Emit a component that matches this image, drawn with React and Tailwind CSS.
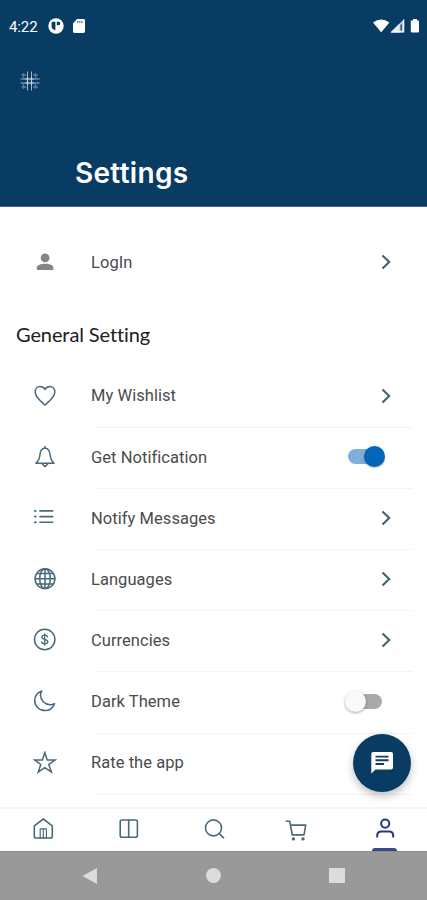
import React, { useState } from "react";

const Icon = ({ children, className = "w-6 h-6 text-[#4a6a7a]", width = 1.5 }) => (
  <svg
    viewBox="0 0 24 24"
    fill="none"
    stroke="currentColor"
    strokeWidth={width}
    strokeLinecap="round"
    strokeLinejoin="round"
    className={`shrink-0 ${className}`}
  >
    {children}
  </svg>
);

const HeartIcon = () => (
  <Icon>
    <path d="M12 21C8 17.6 2.2 13.4 2.2 8.1C2.2 4.8 4.4 2.5 7.1 2.5C9.2 2.5 11 3.6 12 5.4C13 3.6 14.8 2.5 16.9 2.5C19.6 2.5 21.8 4.8 21.8 8.1C21.8 13.4 16 17.6 12 21Z" />
  </Icon>
);

const BellIcon = () => (
  <Icon>
    <path d="M12 1.4V2.9M12 2.9C8.9 3.4 7.2 6.1 7 9.2C6.7 13.6 5.6 15.8 2.9 18.2H21.1C18.4 15.8 17.3 13.6 17 9.2C16.8 6.1 15.1 3.4 12 2.9Z" />
    <path d="M8.9 18.6L12 21.8L15.1 18.6" />
  </Icon>
);

const ListIcon = () => (
  <Icon width={1.6}>
    <path d="M6.9 4.9H19.7M6.9 10.6H19.7M6.9 16.3H19.7" />
    <path d="M2 4.9H2.6M2 10.6H2.6M2 16.3H2.6" strokeWidth="2" />
  </Icon>
);

const GlobeIcon = () => (
  <Icon>
    <circle cx="12" cy="11.7" r="9.9" />
    <ellipse cx="12" cy="11.7" rx="5.3" ry="9.9" />
    <path d="M12 1.8V21.6M2.1 11.7H21.9M4 6.5H20M4 16.9H20" />
  </Icon>
);

const DollarIcon = () => (
  <Icon>
    <circle cx="11.7" cy="11.5" r="10.2" />
    <path
      d="M14.6 8.9C14.3 7.7 13.2 7.2 11.7 7.2C10 7.2 8.9 8 8.9 9.3C8.9 12.2 14.8 10.7 14.8 13.7C14.8 15 13.5 15.8 11.8 15.8C10 15.8 8.9 15.1 8.6 13.8M11.7 5.9V17.1"
      strokeWidth="1.3"
    />
  </Icon>
);

const MoonIcon = () => (
  <Icon>
    <path d="M8.8 2C4.6 3.1 1.6 7 1.7 11.6C1.8 17.2 6.3 21.6 12 21.6C16.3 21.6 19.9 19 21.5 14.7C20 15.6 18.6 15.9 17.2 15.8C11.6 15.6 7.5 11.3 7.5 6C7.5 4.5 8 3.2 8.8 2Z" />
  </Icon>
);

const StarIcon = () => (
  <Icon>
    <path
      d="M11.8 1.6L14.2 8.9H22.2L15.8 13.5L18.4 21.2L11.8 16.6L5.2 21.2L7.8 13.5L1.4 8.9H9.4Z"
      strokeLinejoin="miter"
    />
  </Icon>
);

const Chevron = () => (
  <svg viewBox="0 0 10 16" fill="none" className="w-[10px] h-4 shrink-0 mr-[6px]">
    <path d="M1.5 1.5L8.2 8L1.5 14.5" stroke="#446170" strokeWidth="2.1" />
  </svg>
);

const Toggle = ({ on, onChange }) => (
  <button
    type="button"
    role="switch"
    aria-checked={on}
    onClick={onChange}
    className={`flex items-center h-[22px] shrink-0 ${on ? "mr-[12px]" : "mr-[15px]"}`}
  >
    {on ? (
      <>
        <span className="w-[30px] h-[15px] rounded-full bg-[#7eafdb]" />
        <span className="w-[21px] h-[21px] -ml-[14px] rounded-full bg-[#0566b8] shadow-[0_1px_2px_rgba(0,0,0,0.25)]" />
      </>
    ) : (
      <>
        <span className="w-[21px] h-[21px] z-10 rounded-full bg-[#fafafa] shadow-[0_1px_3px_rgba(0,0,0,0.35)]" />
        <span className="w-[30px] h-[15px] -ml-[14px] rounded-full bg-[#a9a9a9]" />
      </>
    )}
  </button>
);

const Row = ({ icon, label, children }) => (
  <div className="h-[61.15px] flex flex-col shrink-0">
    <div className="flex-1 flex items-center pl-[33px] pr-[30px] pb-[2px]">
      {icon}
      <span className="ml-[34px] flex-1 pt-[2px] text-[16.5px] tracking-[0.05px] text-[#4b4b4b]">
        {label}
      </span>
      {children}
    </div>
    <div className="h-px ml-[96px] mr-[15px] bg-[#f4f4f4]" />
  </div>
);

const StatusBar = () => (
  <div className="flex items-center h-[52px] pl-[9px] pr-[6px] text-white">
    <span className="text-[15px] leading-none tracking-[-0.1px] w-[39px] pt-[2px]">4:22</span>
    <svg viewBox="0 0 16 16" className="w-4 h-4">
      <circle cx="8" cy="8" r="7.7" fill="#fff" />
      <path d="M3.6 5Q3.6 3.8 4.8 3.8H7.4V12.2C5.4 12 3.7 10.6 3.6 8.6Z" fill="#083c63" />
      <path d="M8.8 3.8H10.8Q12.2 3.8 12.2 5.4Q12.2 7.2 10.6 7.2H8.8Z" fill="#083c63" />
    </svg>
    <svg viewBox="0 0 12 14" className="w-3 h-[14px] ml-[9px]">
      <path d="M4.2 0H10.6Q12 0 12 1.4V12.6Q12 14 10.6 14H1.4Q0 14 0 12.6V4.2Z" fill="#fff" />
      <path d="M4.8 2.1V3.8M6.9 2.1V3.8M9 2.1V3.8" stroke="#083c63" strokeWidth="1" />
    </svg>
    <span className="flex-1" />
    <svg viewBox="0 0 48 16" className="w-12 h-4">
      <path d="M0 4.4Q8.2 -1.5 16.4 4.4L8.2 14.3Z" fill="#fff" />
      <path d="M31.2 1V14.4H17.5Z" fill="#c2ced8" />
      <path d="M26.5 5.6V14.4H17.5Z" fill="#e4eaee" />
      <path d="M28.2 6.5V12.5" stroke="#335b7b" strokeWidth="1.6" />
      <path d="M30.7 1.5V13.9H18.5" stroke="#fff" strokeWidth="0.9" fill="none" />
      <path d="M40 1H44V2.4H46V13.2Q46 14.5 44.7 14.5H39.1Q37.8 14.5 37.8 13.2V2.4H40Z" fill="#fff" />
    </svg>
  </div>
);

const Header = () => (
  <header className="h-[207px] shrink-0 bg-[#083c63] border-b border-[#4c6488] flex flex-col">
    <StatusBar />
    <svg viewBox="0 0 20 20" className="w-5 h-5 ml-[20px] mt-[19px]" stroke="#d5e0ea">
      <path d="M7.5 0.5V19.5M11.5 0.5V19.5M0.5 8H19.5M0.5 12H19.5" strokeWidth="1" opacity="0.75" />
      <path d="M3.5 2V7M15.5 2V7M3.5 13V18M15.5 13V18M1.5 4H6M13 4H18M1.5 16H6M13 16H18" strokeWidth="1.4" opacity="0.4" />
      <path d="M7.5 6V14M11.5 6V14M5 8H14M5 12H14" strokeWidth="1.2" opacity="0.7" />
    </svg>
    <h1 className="mt-[63px] ml-[75px] font-['Inter'] text-[28px] leading-[38px] font-semibold tracking-[0.3px] text-white">
      Settings
    </h1>
  </header>
);

const BottomNav = () => (
  <nav className="h-[44px] shrink-0 flex border-t-2 border-[#f5f5f5] bg-white pl-[31px]">
    <div className="w-[86px] pt-[8px]">
      <Icon width={1.6}>
        <path d="M3.3 8.8L12.3 2L21.3 8.8V19.2Q21.3 21 19.5 21H5.1Q3.3 21 3.3 19.2Z" />
        <path d="M9.2 20.9V11.9H15.4V20.9M12.3 12.4V20.9" strokeWidth="1.2" />
      </Icon>
    </div>
    <div className="w-[86px] pt-[8px]">
      <Icon width={1.6}>
        <rect x="3.2" y="3" width="17.2" height="17.2" rx="1.8" />
        <path d="M11.7 3.2V20.2" />
      </Icon>
    </div>
    <div className="w-[82px] pt-[8px]">
      <Icon width={1.6}>
        <circle cx="10.5" cy="10.9" r="8" />
        <path d="M16.3 16.7L20.6 20.8" />
      </Icon>
    </div>
    <div className="w-[86px] pt-[8px]">
      <Icon width={1.6}>
        <path d="M1.2 4.3H4.7L7.3 17.9H19L20.7 8.1H5.5" />
        <circle cx="8.4" cy="21.9" r="0.9" fill="currentColor" />
        <circle cx="18" cy="21.9" r="0.9" fill="currentColor" />
      </Icon>
    </div>
    <div className="w-[27px] flex flex-col items-center justify-between pt-[8px]">
      <Icon className="w-6 h-6 text-[#263a79]" width={2}>
        <circle cx="12.2" cy="6.6" r="4.1" />
        <path d="M4.2 20.6V18.6C4.2 16 6 14.5 8.4 14.5H16C18.4 14.5 20.2 16 20.2 18.6V20.6" strokeLinecap="butt" />
      </Icon>
      <span className="w-[25px] h-[3px] rounded-t-sm bg-[#354b83]" />
    </div>
  </nav>
);

const SystemBar = () => (
  <div className="h-[49px] shrink-0 bg-[#999999] border-t border-[#8c8c8c] flex items-center justify-between pl-[82px] pr-[82px] pb-[1px]">
    <svg viewBox="0 0 16 18" className="w-4 h-[18px]">
      <path d="M15 1V17L0.5 9Z" fill="#dcdcdc" />
    </svg>
    <span className="w-[15px] h-[15px] rounded-full bg-[#dcdcdc]" />
    <span className="w-4 h-[15px] bg-[#dcdcdc]" />
  </div>
);

const App = () => {
  const [notify, setNotify] = useState(true);
  const [dark, setDark] = useState(false);

  return (
    <div className="relative w-[427px] h-[900px] overflow-hidden flex flex-col bg-white font-['Roboto',sans-serif]">
      <Header />

      <main className="flex-1 min-h-0 overflow-hidden flex flex-col">
        <div className="h-[110px] flex items-center pl-[33px] pr-[30px] shrink-0">
          <svg viewBox="0 0 24 24" className="w-6 h-6 shrink-0" fill="#858585">
            <circle cx="12.1" cy="7.8" r="4.4" />
            <path d="M3.8 20V17.6C3.8 14.9 8 13.7 12.1 13.7C16.2 13.7 20.4 14.9 20.4 17.6V20Z" />
          </svg>
          <span className="ml-[34px] flex-1 text-[16.5px] tracking-[0.05px] text-[#4b4b4b] pt-[2px]">
            LogIn
          </span>
          <Chevron />
        </div>

        <h2 className="h-[49.7px] shrink-0 pl-[16px] pt-[3px] font-['Lato'] text-[20px] leading-[28px] tracking-[-0.1px] text-[#202020]">
          General Setting
        </h2>

        <Row icon={<HeartIcon />} label="My Wishlist">
          <Chevron />
        </Row>
        <Row icon={<BellIcon />} label="Get Notification">
          <Toggle on={notify} onChange={() => setNotify(!notify)} />
        </Row>
        <Row icon={<ListIcon />} label="Notify Messages">
          <Chevron />
        </Row>
        <Row icon={<GlobeIcon />} label="Languages">
          <Chevron />
        </Row>
        <Row icon={<DollarIcon />} label="Currencies">
          <Chevron />
        </Row>
        <Row icon={<MoonIcon />} label="Dark Theme">
          <Toggle on={dark} onChange={() => setDark(!dark)} />
        </Row>
        <Row icon={<StarIcon />} label="Rate the app" />
      </main>

      <BottomNav />
      <SystemBar />

      {/* Floating chat button */}
      <button
        type="button"
        aria-label="Chat"
        className="absolute left-[353px] top-[734px] w-[58px] h-[58px] rounded-full bg-[#083c63] flex items-center justify-center shadow-[0_4px_8px_rgba(0,0,0,0.25)]"
      >
        <svg viewBox="0 0 22 22" className="w-[22px] h-[22px]">
          <path d="M2 0H20Q22 0 22 2V15.5Q22 17.5 20 17.5H4.5L0.3 21.5V2Q0.3 0 2 0Z" fill="#fff" />
          <path d="M4.5 4.6H17.5M4.5 8.3H17.5M4.5 12H13" stroke="#1c3765" strokeWidth="1.9" />
        </svg>
      </button>
    </div>
  );
};

export default App;
